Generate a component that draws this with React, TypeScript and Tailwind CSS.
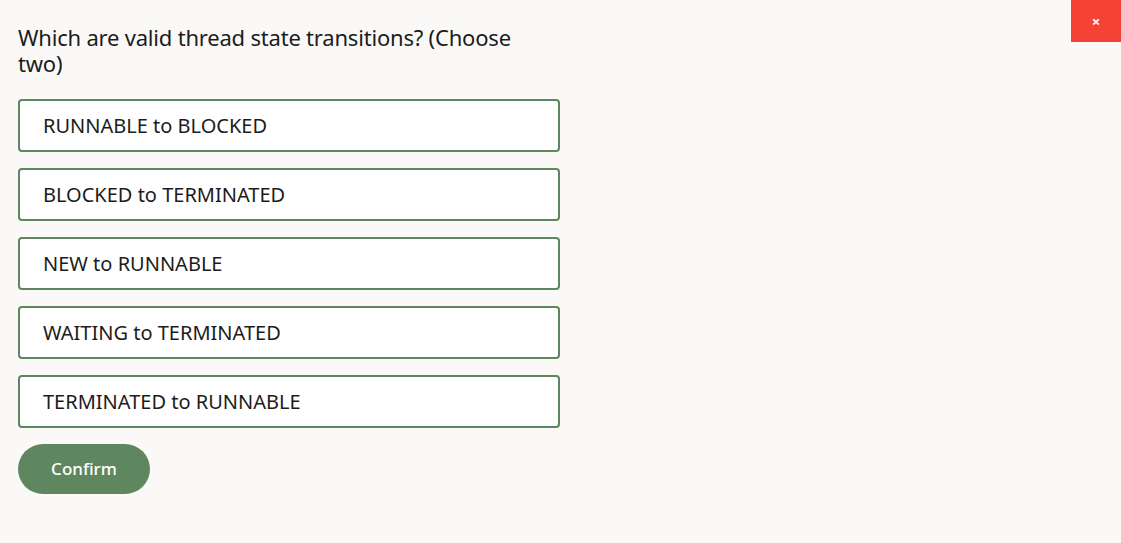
import { useState } from "react";

const opciones = [
	"RUNNABLE to BLOCKED",
	"BLOCKED to TERMINATED",
	"NEW to RUNNABLE",
	"WAITING to TERMINATED",
	"TERMINATED to RUNNABLE",
];

const App = () => {
	const [seleccion, setSeleccion] = useState<number[]>([]);

	const toggle = (i: number) => {
		setSeleccion((s) => (s.includes(i) ? s.filter((x) => x !== i) : [...s, i]));
	};

	return (
		<div className="w-full h-[543px] bg-[#faf9f7] relative font-['Noto_Sans',sans-serif] text-[#1c1c1c]">
			<button className="absolute top-0 right-0 w-[50px] h-[42px] bg-[#f44336] text-white text-[15px] font-bold flex items-center justify-center">
				×
			</button>
			<div className="w-[542px] ml-[18px] pt-[24px] flex flex-col">
				<h2 className="text-[22px] leading-[26px] tracking-[-0.2px] pr-[20px]">Which are valid thread state transitions? (Choose two)</h2>
				<ul className="mt-[23px] flex flex-col gap-[16px]">
					{opciones.map((item, i) => (
						<li
							key={item}
							onClick={() => toggle(i)}
							className={`h-[53px] border-2 border-[#5f875f] rounded-[4px] flex items-center pl-[23px] text-[20px] cursor-pointer ${seleccion.includes(i) ? "bg-[#e8f0e8]" : "bg-white"}`}
						>
							{item}
						</li>
					))}
				</ul>
				<button className="mt-[16px] w-[132px] h-[50px] rounded-full bg-[#5f875f] text-white text-[17px] font-medium">Confirm</button>
			</div>
		</div>
	);
};

export default App;
